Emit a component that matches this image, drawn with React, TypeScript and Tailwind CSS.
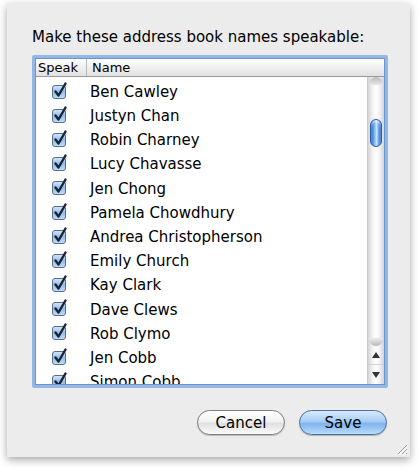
import React from 'react'

const NAMES = [
  'Ben Cawley',
  'Justyn Chan',
  'Robin Charney',
  'Lucy Chavasse',
  'Jen Chong',
  'Pamela Chowdhury',
  'Andrea Christopherson',
  'Emily Church',
  'Kay Clark',
  'Dave Clews',
  'Rob Clymo',
  'Jen Cobb',
  'Simon Cobb',
]

const FONT = { fontFamily: '"DejaVu Sans", "Lucida Grande", sans-serif' }

function CheckBox() {
  return (
    <svg width="18" height="18" viewBox="0 0 18 18" className="shrink-0">
      <defs>
        <linearGradient id="cbFill" x1="0" y1="0" x2="0" y2="1">
          <stop offset="0" stopColor="#d6e8fb" />
          <stop offset="0.5" stopColor="#8fbdf0" />
          <stop offset="1" stopColor="#c4dffb" />
        </linearGradient>
      </defs>
      <rect x="1.5" y="3.5" width="13" height="13" rx="2.5" fill="url(#cbFill)" stroke="#5b6f8e" />
      <path d="M4.5 9.5 L7.5 13.5 L14.5 1.5" fill="none" stroke="#1d2430" strokeWidth="2.4" strokeLinecap="round" strokeLinejoin="round" />
    </svg>
  )
}

function ScrollBar() {
  return (
    <div className="w-[17px] h-full flex flex-col border-l border-[#c8c8c8] bg-[linear-gradient(90deg,#d4d4d4,#f4f4f4_30%,#ffffff_50%,#f4f4f4_70%,#d4d4d4)]">
      {/* track top cap */}
      <div className="h-[8px] mx-[1px] rounded-t-full bg-[linear-gradient(180deg,#b9b9b9,#e8e8e8)]" />
      <div className="h-[34px]" />
      {/* thumb */}
      <div className="mx-[2px] h-[28px] rounded-full border border-[#2a5da8] bg-[linear-gradient(90deg,#2a66c4,#7cb5f2_35%,#c9e3fd_55%,#5e9be6_80%,#2a66c4)] shadow-[inset_0_2px_2px_rgba(255,255,255,0.6)]" />
      <div className="flex-1" />
      {/* track bottom cap */}
      <div className="h-[8px] mx-[1px] rounded-b-full bg-[linear-gradient(0deg,#b9b9b9,#ececec)]" />
      <div className="h-[19px] flex items-center justify-center border-b border-[#cfcfcf]">
        <svg width="8" height="6" viewBox="0 0 8 6"><path d="M4 0 L8 6 L0 6 Z" fill="#333" /></svg>
      </div>
      <div className="h-[19px] flex items-center justify-center">
        <svg width="8" height="6" viewBox="0 0 8 6"><path d="M0 0 L8 0 L4 6 Z" fill="#333" /></svg>
      </div>
    </div>
  )
}

export default function App() {
  return (
    <div className="w-[420px] h-[472px] bg-white pt-[3px] pl-[7px]" style={FONT}>
      <div className="relative w-[403px] h-[454px] bg-[#ececec] shadow-[0_3px_8px_rgba(0,0,0,0.35)] pl-[25px] pr-[22px] pt-[24px]">
        <div className="text-[15px] leading-[20px] text-black whitespace-nowrap">
          Make these address book names speakable:
        </div>

        {/* table with focus ring */}
        <div className="mt-[8px] h-[333px] rounded-[2px] border-[3px] border-[#93b8e6] bg-[#6b94cc] p-[1px]">
          <div className="h-full bg-white flex flex-col overflow-hidden">
            {/* header */}
            <div className="h-[18px] flex text-[13px] leading-[17px] text-black bg-[linear-gradient(180deg,#ffffff,#f0f0f0_50%,#e2e2e2)] border-b border-[#9a9a9a]">
              <div className="w-[51px] pl-[2px] border-r border-[#b8b8b8]">Speak</div>
              <div className="pl-[5px]">Name</div>
            </div>
            {/* body */}
            <div className="flex-1 flex min-h-0">
              <div className="flex-1 overflow-hidden pt-[3px]">
                {NAMES.map((n) => (
                  <div key={n} className="h-[24.2px] flex items-center">
                    <div className="w-[54px] pl-[15px] -mt-[3px]">
                      <CheckBox />
                    </div>
                    <span className="text-[15px] text-black whitespace-nowrap">{n}</span>
                  </div>
                ))}
              </div>
              <ScrollBar />
            </div>
          </div>
        </div>

        {/* buttons */}
        <div className="mt-[22px] flex justify-end gap-[14px] pr-[1px]">
          <button className="w-[88px] h-[25px] rounded-full border border-[#7d7d7d] bg-[linear-gradient(180deg,#ffffff,#f2f2f2_45%,#e0e0e0_55%,#fbfbfb)] text-[15px] leading-[22px] text-black shadow-[0_1px_1px_rgba(0,0,0,0.2)]">
            Cancel
          </button>
          <button className="w-[88px] h-[25px] rounded-full border border-[#4f6f9e] bg-[linear-gradient(180deg,#d9ebfd,#a6cdf5_45%,#7fb4ee_55%,#b9dcfb)] text-[15px] leading-[22px] text-black shadow-[0_1px_1px_rgba(0,0,0,0.25)]">
            Save
          </button>
        </div>

        {/* resize grip */}
        <svg className="absolute right-[2px] bottom-[2px]" width="12" height="12" viewBox="0 0 12 12">
          <path d="M11 2 L2 11 M11 6 L6 11 M11 10 L10 11" stroke="#9a9a9a" strokeWidth="1" />
          <path d="M12 3 L3 12 M12 7 L7 12" stroke="#ffffff" strokeWidth="1" />
        </svg>
      </div>
    </div>
  )
}
